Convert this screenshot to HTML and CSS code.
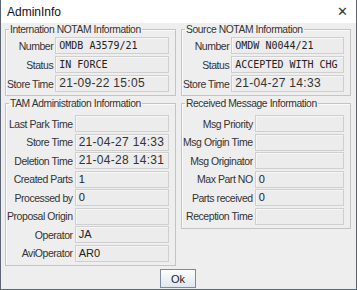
FILE: index.html
```html
<!DOCTYPE html>
<html lang="en">
<head>
  <meta charset="UTF-8" />
  <title>AdminInfo</title>
  <link rel="stylesheet" href="styles.css">
</head>
<body>
  <div class="window">
    <div class="titlebar">
      <span class="title">AdminInfo</span>
      <span class="close">&#x2715;</span>
    </div>

    <div class="content">
      <div class="panels">
        <fieldset class="group">
          <legend>Internation NOTAM Information</legend>
          <div class="rows">
            <label>Number</label><div class="field mono">OMDB A3579/21</div>
            <label>Status</label><div class="field mono">IN FORCE</div>
            <label>Store Time</label><div class="field date">21-09-22 15:05</div>
          </div>
        </fieldset>

        <fieldset class="group">
          <legend>Source NOTAM Information</legend>
          <div class="rows">
            <label>Number</label><div class="field mono">OMDW N0044/21</div>
            <label>Status</label><div class="field mono">ACCEPTED WITH CHG</div>
            <label>Store Time</label><div class="field date">21-04-27 14:33</div>
          </div>
        </fieldset>

        <fieldset class="group">
          <legend>TAM Administration Information</legend>
          <div class="rows tight">
            <label>Last Park Time</label><div class="field"></div>
            <label>Store Time</label><div class="field date">21-04-27 14:33</div>
            <label>Deletion Time</label><div class="field date">21-04-28 14:31</div>
            <label>Created Parts</label><div class="field">1</div>
            <label>Processed by</label><div class="field">0</div>
            <label>Proposal Origin</label><div class="field"></div>
            <label>Operator</label><div class="field">JA</div>
            <label>AviOperator</label><div class="field">AR0</div>
          </div>
        </fieldset>

        <fieldset class="group">
          <legend>Received Message Information</legend>
          <div class="rows tight">
            <label>Msg Priority</label><div class="field"></div>
            <label>Msg Origin Time</label><div class="field"></div>
            <label>Msg Originator</label><div class="field"></div>
            <label>Max Part NO</label><div class="field">0</div>
            <label>Parts received</label><div class="field">0</div>
            <label>Reception Time</label><div class="field"></div>
          </div>
        </fieldset>
      </div>

      <div class="actions">
        <button type="button">Ok</button>
      </div>
    </div>
  </div>
</body>
</html>
```

FILE: styles.css
```css
body {
  margin: 0;
  font-family: 'Liberation Sans', Arial, sans-serif;
  background: #ffffff;
}
.window {
  width: 357px;
  height: 290px;
  box-sizing: border-box;
  border: 1px solid #5b6573;
  border-top: none;
  background: #eeeeee;
  display: flex;
  flex-direction: column;
}
.titlebar {
  height: 23px;
  background: #ffffff;
  display: flex;
  align-items: center;
  justify-content: space-between;
  padding: 0 8px 0 6px;
}
.title {
  font-size: 12px;
  color: #111;
}
.close {
  font-size: 13px;
  color: #333;
}
.content {
  flex: 1;
  display: flex;
  flex-direction: column;
  padding: 0 5px 0 4px;
}
.panels {
  display: grid;
  grid-template-columns: 171px 170px;
  column-gap: 5px;
  row-gap: 1px;
  align-items: start;
}
.group {
  margin: 0;
  padding: 1px 6px 3px 1px;
  border: 1px solid #c4c4c4;
  box-shadow: inset 1px 1px 0 #fafafa;
  min-width: 0;
}
.group legend {
  font-size: 10.3px;
  letter-spacing: -0.4px;
  color: #333;
  padding: 0 1px;
  margin-left: 2px;
  line-height: 13px;
}
.rows {
  display: grid;
  grid-template-columns: auto 1fr;
  column-gap: 2px;
  row-gap: 2px;
  align-items: center;
}
.rows.tight {
  row-gap: 1.5px;
  margin-top: 4px;
}
.rows label {
  font-size: 10.5px;
  letter-spacing: -0.45px;
  color: #333;
  text-align: right;
  white-space: nowrap;
}
.field {
  height: 17px;
  box-sizing: border-box;
  border: 1px solid #cfcfcf;
  background: #ececec;
  box-shadow: inset 1px 1px 0 #f6f6f6;
  font-size: 11px;
  color: #222;
  line-height: 15px;
  padding: 0 3px;
  white-space: nowrap;
  overflow: hidden;
}
.field.mono {
  font-family: 'DejaVu Sans Mono', monospace;
  font-size: 10px;
}
.field.date {
  font-size: 12px;
  letter-spacing: 0.3px;
  color: #333;
}
.actions {
  flex: 1;
  display: flex;
  justify-content: center;
  align-items: center;
  padding-top: 3px;
}
button {
  width: 36px;
  height: 19px;
  font-family: 'Liberation Sans', Arial, sans-serif;
  font-size: 11px;
  color: #222;
  border: 1px solid #7d8ba0;
  background: linear-gradient(#fdfdfd, #dfe7f0);
  padding: 0;
}
```
